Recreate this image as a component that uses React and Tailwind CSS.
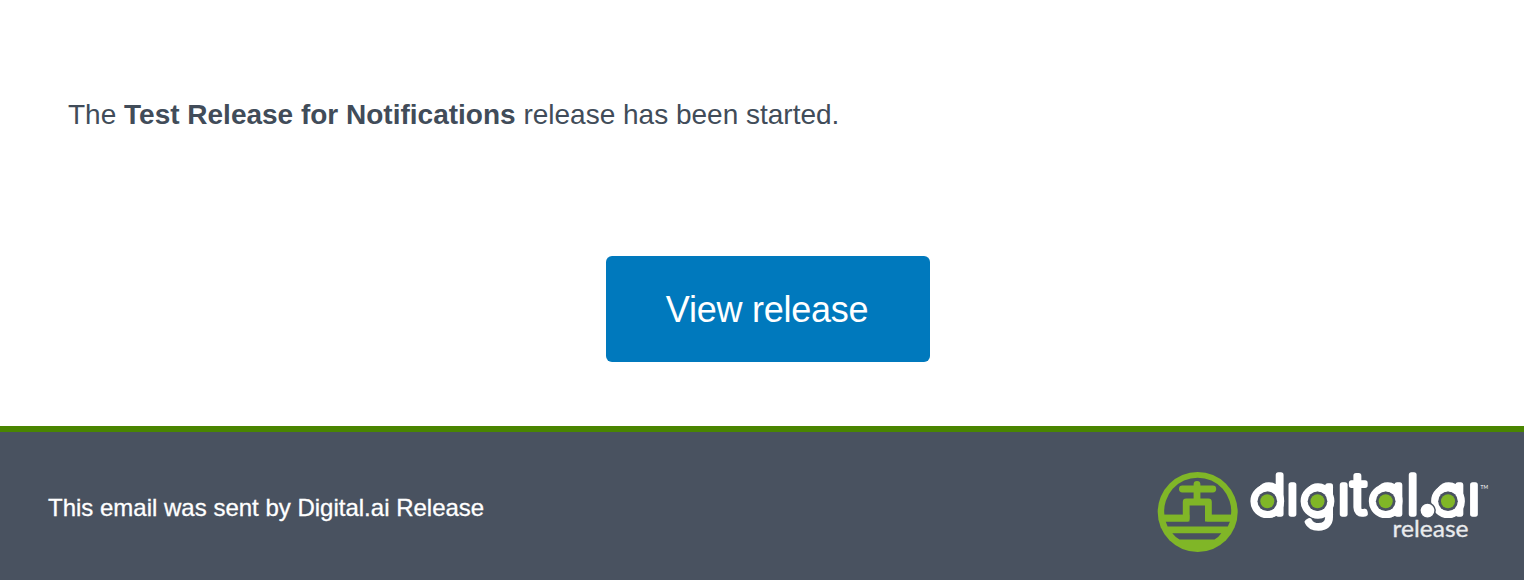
function ReleaseLogo() {
  const bowls = [109.3, 159.5, 227.7, 290];
  return (
    <svg className="overflow-visible" width="334" height="84" viewBox="0 0 334 84" role="img" aria-label="digital.ai release">
      <circle cx="39.7" cy="40" r="40" fill="#80b627" />
      <path d="M6.4 42.8A33.5 33.5 0 1 1 73 42.8Z" fill="#495260" />
      <path d="M7.7 49.6H72L69.8 54.5H9.6ZM14.3 61.3H63.3Q61 65 56.5 67.4H21.5Q17 65 14.3 61.3Z" fill="#495260" />
      <path d="M31.4 42H47V50H31.4Z" fill="#495260" />
      <g fill="none" stroke="#80b627" strokeWidth="6.8" strokeLinejoin="round" strokeLinecap="round">
        <path d="M24.4 17H54.8M39 12.3V29" />
        <path d="M6 46.2H28.2V30H50.4V46.2H73" />
      </g>
      <g
        className="font-['Inter',sans-serif] text-[53px] font-extralight [font-feature-settings:'cv11']"
        fill="#fff"
        stroke="#fff"
        strokeWidth="5.4"
        strokeLinejoin="round"
      >
        <text y="42.2">
          <tspan x="96.2 128.6">dı</tspan>
          <tspan x="144.8" dy="2.2" className="text-[55px]">g</tspan>
          <tspan x="179.8" dy="-2.2">ı</tspan>
          <tspan x="193.2" className="text-[56px]">t</tspan>
          <tspan x="215 248.7 263 276 310">al.aı</tspan>
        </text>
      </g>
      {bowls.map((x) => (
        <g key={x}>
          <circle cx={x} cy="29.2" r="13.2" fill="none" stroke="#fff" strokeWidth="7.4" />
          <circle cx={x} cy="29.2" r="9.8" fill="#495260" />
          <circle cx={x} cy="29.2" r="7" fill="#80b627" />
        </g>
      ))}
      <circle cx="269.5" cy="38.6" r="7.6" fill="#fff" stroke="#495260" strokeWidth="1.5" />
      <text x="322.5" y="17" fill="#fff" className="font-['Lato',sans-serif] text-[6px]" textLength="7.5" lengthAdjust="spacingAndGlyphs">TM</text>
      <text x="234.5" y="64.8" fill="#e9ebed" stroke="#e9ebed" strokeWidth="0.3" className="font-['Lato',sans-serif] text-[23px]" textLength="76" lengthAdjust="spacingAndGlyphs">release</text>
    </svg>
  );
}

export default function App() {
  return (
    <div className="flex h-[580px] w-[1524px] flex-col overflow-hidden bg-white font-['Liberation_Sans',sans-serif]">
      <main className="flex h-[426px] flex-col">
        <p className="pl-[68px] pt-[99px] text-[28px] leading-8 text-[#414c59]">
          The <strong className="font-bold">Test Release for Notifications</strong> release has been started.
        </p>
        <button className="ml-[606px] mt-[125px] h-[106px] w-[324px] rounded-md bg-[#0079bd] pr-0.5 pt-0.5 text-[36px] tracking-[-0.25px] text-white">
          View release
        </button>
      </main>
      <footer className="flex h-[154px] items-start justify-between border-t-[6px] border-[#498500] bg-[#495260] pl-12 pr-8">
        <p className="pt-[60px] text-[24px] leading-8 text-white [-webkit-text-stroke:0.3px_white]">This email was sent by Digital.ai Release</p>
        <div className="pt-10">
          <ReleaseLogo />
        </div>
      </footer>
    </div>
  );
}
